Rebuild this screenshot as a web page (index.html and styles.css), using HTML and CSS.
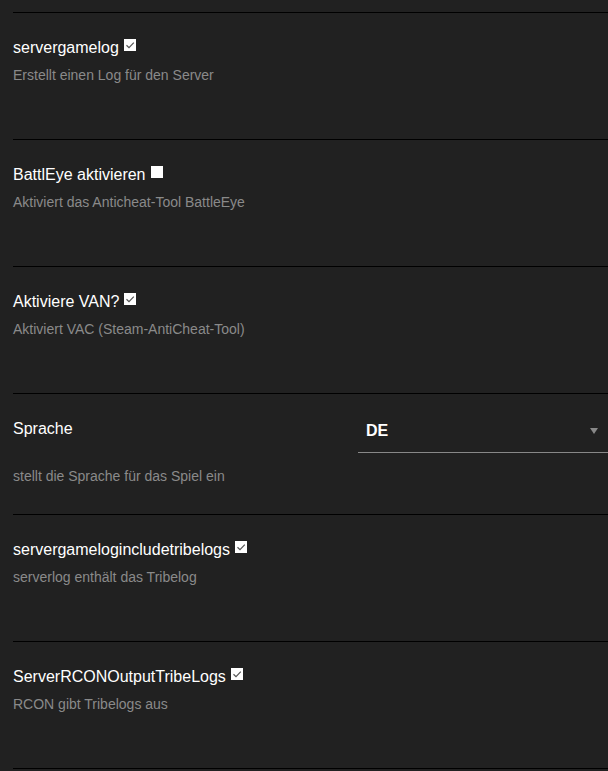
FILE: index.html
```html
<!DOCTYPE html>
<html lang="de">
<head>
    <meta charset="UTF-8">
    <meta name="viewport" content="width=device-width, initial-scale=1.0">
    <title>Server Einstellungen</title>
    <link rel="stylesheet" href="styles.css">
</head>
<body>
    <div class="settings">
        <div class="setting">
            <div class="setting-label">servergamelog<span class="check checked"><svg viewBox="0 0 12 12"><path d="M2.5 6.2 L5 8.6 L9.8 3.6"/></svg></span></div>
            <div class="setting-desc">Erstellt einen Log für den Server</div>
        </div>
        <div class="setting">
            <div class="setting-label">BattlEye aktivieren<span class="check"></span></div>
            <div class="setting-desc">Aktiviert das Anticheat-Tool BattleEye</div>
        </div>
        <div class="setting">
            <div class="setting-label">Aktiviere VAN?<span class="check checked"><svg viewBox="0 0 12 12"><path d="M2.5 6.2 L5 8.6 L9.8 3.6"/></svg></span></div>
            <div class="setting-desc">Aktiviert VAC (Steam-AntiCheat-Tool)</div>
        </div>
        <div class="setting setting-select">
            <div class="setting-row">
                <div class="setting-label">Sprache</div>
                <div class="select">
                    <span class="select-value">DE</span>
                    <span class="select-arrow"></span>
                </div>
            </div>
            <div class="setting-desc">stellt die Sprache für das Spiel ein</div>
        </div>
        <div class="setting">
            <div class="setting-label">servergamelogincludetribelogs<span class="check checked"><svg viewBox="0 0 12 12"><path d="M2.5 6.2 L5 8.6 L9.8 3.6"/></svg></span></div>
            <div class="setting-desc">serverlog enthält das Tribelog</div>
        </div>
        <div class="setting">
            <div class="setting-label">ServerRCONOutputTribeLogs<span class="check checked"><svg viewBox="0 0 12 12"><path d="M2.5 6.2 L5 8.6 L9.8 3.6"/></svg></span></div>
            <div class="setting-desc">RCON gibt Tribelogs aus</div>
        </div>
        <div class="setting setting-end"></div>
    </div>
</body>
</html>
```

FILE: styles.css
```css
body {
    font-family: "Liberation Sans", Arial, sans-serif;
    background-color: #212121;
    color: #fff;
    margin: 0;
    padding: 12px 0 0 13px;
}
.settings {
    display: flex;
    flex-direction: column;
}
.setting {
    border-top: 1px solid #000;
    padding: 25px 0 56px 0;
}
.setting-label {
    font-size: 16px;
    line-height: 20px;
    color: #fff;
}
.setting-desc {
    font-size: 14px;
    line-height: 16px;
    color: #8a8a8a;
    margin-top: 9px;
}
.check {
    display: inline-block;
    width: 12px;
    height: 12px;
    margin-left: 5px;
    margin-bottom: 2px;
    vertical-align: baseline;
    background-color: #fff;
}
.check svg {
    display: block;
    width: 12px;
    height: 12px;
}
.check svg path {
    fill: none;
    stroke: #555;
    stroke-width: 1.2;
}
.setting-select {
    padding-bottom: 30px;
}
.setting-select .setting-desc {
    margin-top: 15px;
}
.setting-row {
    display: flex;
    justify-content: space-between;
    align-items: flex-start;
}
.select {
    display: flex;
    align-items: center;
    justify-content: space-between;
    width: 242px;
    padding: 2px 0 11px 8px;
    border-bottom: 1px solid #888;
}
.select-value {
    font-size: 16px;
    font-weight: bold;
    line-height: 20px;
    color: #fff;
}
.select-arrow {
    width: 0;
    height: 0;
    margin-right: 10px;
    border-left: 4px solid transparent;
    border-right: 4px solid transparent;
    border-top: 6px solid #888;
}
.setting-end {
    padding: 0;
    height: 10px;
}
```
